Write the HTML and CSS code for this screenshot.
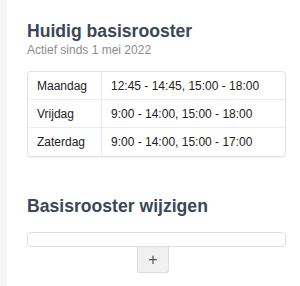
FILE: index.html
```html
<!DOCTYPE html>
<html lang="nl">
<head>
<meta charset="utf-8">
<link rel="stylesheet" href="styles.css">
</head>
<body>
<div class="page">
  <div class="sidebar"></div>
  <main class="main">
    <h1 class="title">Huidig basisrooster</h1>
    <p class="subtitle">Actief sinds 1 mei 2022</p>
    <table class="schedule">
      <tr><td class="day">Maandag</td><td class="hours">12:45 - 14:45, 15:00 - 18:00</td></tr>
      <tr><td class="day">Vrijdag</td><td class="hours">9:00 - 14:00, 15:00 - 18:00</td></tr>
      <tr><td class="day">Zaterdag</td><td class="hours">9:00 - 14:00, 15:00 - 17:00</td></tr>
    </table>
    <h2 class="title title-second">Basisrooster wijzigen</h2>
    <div class="editor">
      <div class="input-box"></div>
      <button class="add-btn" type="button">+</button>
    </div>
  </main>
</div>
</body>
</html>
```
FILE: styles.css
```css
html, body {
  margin: 0;
  padding: 0;
  background: #ffffff;
  font-family: "Liberation Sans", Arial, sans-serif;
}
.page {
  display: flex;
  min-height: 286px;
}
.sidebar {
  width: 7px;
  flex: none;
  background: #f5f5f5;
}
.main {
  flex: 1;
  padding: 21px 14px 0 20px;
}
.title {
  margin: 0;
  font-size: 17.6px;
  line-height: 20px;
  font-weight: bold;
  color: #3a4758;
}
.subtitle {
  margin: 2px 0 0;
  font-size: 12px;
  line-height: 14px;
  color: #8c8c8c;
}
.schedule {
  margin-top: 14px;
  width: 100%;
  border-collapse: separate;
  border-spacing: 0;
  border: 1px solid #e2e2e2;
  border-radius: 4px;
  box-shadow: 0 1px 1px rgba(0,0,0,0.06);
  font-size: 12px;
  color: #222;
}
.schedule td {
  height: 28px;
  padding: 0 0 0 9px;
  box-sizing: border-box;
  border-bottom: 1px solid #ececec;
  vertical-align: middle;
  line-height: 14px;
  white-space: nowrap;
}
.schedule tr:last-child td {
  border-bottom: none;
}
.schedule .day {
  width: 74px;
  border-right: 1px solid #ececec;
}
.title-second {
  margin-top: 39px;
}
.editor {
  margin-top: 16px;
  display: flex;
  flex-direction: column;
}
.input-box {
  height: 15px;
  box-sizing: border-box;
  border: 1px solid #dedede;
  border-radius: 4px;
  background: #fff;
}
.add-btn {
  margin: 0 0 0 110px;
  width: 32px;
  height: 26px;
  padding: 0;
  border: 1px solid #dddddd;
  border-top: none;
  border-radius: 0 0 3px 3px;
  background: #f0f0f0;
  color: #555;
  font-family: "Liberation Sans", Arial, sans-serif;
  font-size: 16px;
  line-height: 24px;
  cursor: pointer;
}
```
